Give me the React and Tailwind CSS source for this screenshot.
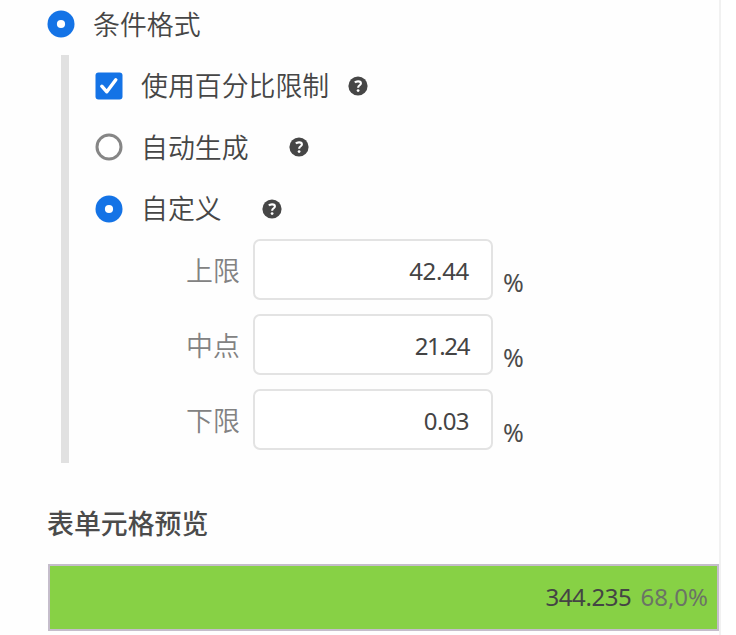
const cjk = "font-['Noto_Sans_CJK_SC',sans-serif]";
const latin = "font-['Noto_Sans','Noto_Sans_CJK_SC',sans-serif]";

function Radio({ checked }) {
  return (
    <svg viewBox="0 0 28 28" className="size-7 shrink-0">
      {checked ? (
        <>
          <circle cx="14" cy="14" r="13.5" fill="#1473e6" />
          <circle cx="14" cy="14" r="4.1" fill="#fff" />
        </>
      ) : (
        <circle cx="14" cy="14" r="12" fill="#fff" stroke="#868686" strokeWidth="3" />
      )}
    </svg>
  );
}

function Checkbox() {
  return (
    <svg viewBox="0 0 28 28" className="size-7 shrink-0">
      <rect x="0.5" y="0.5" width="27" height="27" rx="3" fill="#1473e6" />
      <path d="M6.8 14.2 L11.8 19.8 L20.8 7.8" fill="none" stroke="#fff" strokeWidth="3.4" strokeLinecap="round" strokeLinejoin="round" />
    </svg>
  );
}

function Help() {
  return (
    <svg viewBox="0 0 20 20" className="size-5 shrink-0">
      <circle cx="10" cy="10" r="9.6" fill="#464646" />
      <path d="M6.9 6.5 C8 5.1 12.9 4.6 12.9 7.4 C12.9 9.3 10.1 9.2 10.1 11.8" fill="none" stroke="#fff" strokeWidth="2.1" />
      <circle cx="10.1" cy="14.6" r="1.4" fill="#fff" />
    </svg>
  );
}

function Option({ control, label, gap }) {
  return (
    <div className={`flex h-[61.5px] items-center text-[26.9px] font-[350] leading-none text-[#464646] ${cjk}`}>
      {control}
      <span className="ml-[18px] whitespace-nowrap">{label}</span>
      <span className={gap}>
        <Help />
      </span>
    </div>
  );
}

function Field({ label, value, tracking = "" }) {
  return (
    <div className="flex h-[61px] items-center">
      <span className={`mt-[3px] w-[54px] whitespace-nowrap text-[26.9px] font-[350] leading-none text-[#828282] ${cjk}`}>{label}</span>
      <div className={`ml-[13px] flex h-[61px] w-60 items-center justify-end rounded-[7px] border-2 border-[#e3e3e3] bg-white pt-[4px] pr-[22px] text-2xl text-[#444444] ${tracking} ${latin}`}>
        {value}
      </div>
      <span className={`ml-[10px] mt-[26px] text-[25px] leading-none text-[#4b4b4b] ${latin}`}>%</span>
    </div>
  );
}

export default function App() {
  return (
    <div className="h-[635px] w-[736px] overflow-hidden bg-white">
      <div className="h-full w-[721px] border-r-2 border-[#f1f1f1] bg-[#fefefe] pl-[47px]">
        <div className={`flex h-[55px] items-start pt-[10px] text-[26.9px] font-[350] leading-7 text-[#464646] ${cjk}`}>
          <Radio checked />
          <span className="ml-[18px]">条件格式</span>
        </div>
        <div className="ml-[14px] h-[408px] border-l-8 border-[#e1e1e1] pl-[26px]">
          <Option control={<Checkbox />} label="使用百分比限制" gap="ml-[19px]" />
          <Option control={<Radio />} label="自动生成" gap="ml-[40px]" />
          <Option control={<Radio checked />} label="自定义" gap="ml-[40px]" />
          <div className="-mt-px ml-[91px] flex flex-col gap-[14px]">
            <Field label="上限" value="42.44" tracking="tracking-[-0.3px]" />
            <Field label="中点" value="21.24" tracking="tracking-[-1.4px]" />
            <Field label="下限" value="0.03" tracking="tracking-[-0.6px]" />
          </div>
        </div>
        <h2 className={`mt-[46px] text-[26.9px] font-medium leading-7 text-[#4b4b4b] ${cjk}`}>表单元格预览</h2>
        <div className={`ml-px mt-[27px] flex h-[67px] w-[671px] items-center justify-end gap-[9px] border-2 border-[#c5bdcb] bg-[#87d145] pb-[2px] pr-[9px] text-2xl tracking-[-0.4px] ${latin}`}>
          <span className="text-[#444444]">344.235</span>
          <span className="tracking-normal text-[#6b7465]">68,0%</span>
        </div>
      </div>
    </div>
  );
}
